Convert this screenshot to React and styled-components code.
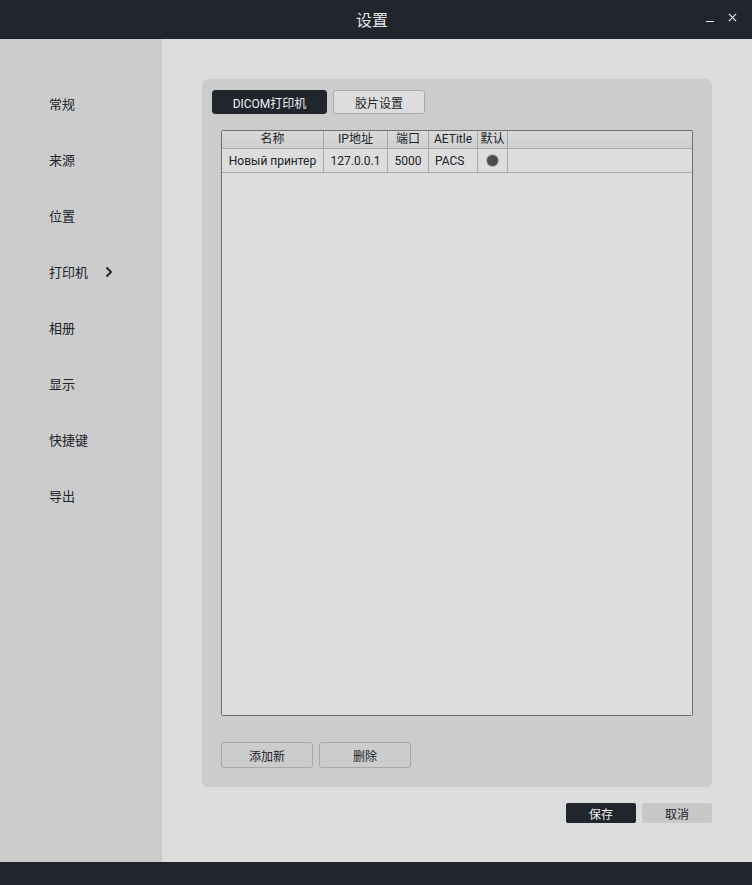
import styled, { createGlobalStyle } from 'styled-components';

const GlobalStyle = createGlobalStyle`
  html, body {
    margin: 0;
    padding: 0;
    background: #dddddd;
  }
  body {
    font-family: Roboto, "Noto Sans CJK SC", sans-serif;
    color: #202329;
  }
`;

const NAV_ITEMS = ['常规', '来源', '位置', '打印机', '相册', '显示', '快捷键', '导出'];

const COLUMNS = [
  { title: '名称', width: 102 },
  { title: 'IP地址', width: 64 },
  { title: '端口', width: 41 },
  { title: 'AETitle', width: 49 },
  { title: '默认', width: 30 },
];

const ROWS = [{ name: 'Новый принтер', ip: '127.0.0.1', port: '5000', ae: 'PACS', isDefault: true }];

const App = () => {
  return (
    <Window>
      <GlobalStyle />
      <TitleBar>
        <Title>设置</Title>
        <WindowControls>
          <Minimize />
          <CloseIcon viewBox='0 0 10 10'>
            <path d='M1 1 L9 9 M9 1 L1 9' stroke='#e6e6e6' strokeWidth='1.4' />
          </CloseIcon>
        </WindowControls>
      </TitleBar>
      <Body>
        <Sidebar>
          {NAV_ITEMS.map((item) => (
            <NavItem key={item}>
              {item}
              {item === '打印机' && (
                <Chevron viewBox='0 0 8 12'>
                  <path d='M1.5 1.5 L6 6 L1.5 10.5' stroke='#202329' strokeWidth='2' fill='none' />
                </Chevron>
              )}
            </NavItem>
          ))}
        </Sidebar>
        <Main>
          <Panel>
            <Tabs>
              <Tab $active style={{ width: 115 }}>DICOM打印机</Tab>
              <Tab style={{ width: 92 }}>胶片设置</Tab>
            </Tabs>
            <Table>
              <HeaderRow>
                {COLUMNS.map((col) => (
                  <HeaderCell key={col.title} $width={col.width}>{col.title}</HeaderCell>
                ))}
                <HeaderCell $fill />
              </HeaderRow>
              {ROWS.map((row) => (
                <Row key={row.name}>
                  <Cell $width={102}>{row.name}</Cell>
                  <Cell $width={64}>{row.ip}</Cell>
                  <Cell $width={41}>{row.port}</Cell>
                  <Cell $width={49} $left>{row.ae}</Cell>
                  <Cell $width={30}>{row.isDefault && <Dot />}</Cell>
                  <Cell $fill />
                </Row>
              ))}
            </Table>
            <Actions>
              <OutlineButton>添加新</OutlineButton>
              <OutlineButton>删除</OutlineButton>
            </Actions>
          </Panel>
          <Footer>
            <FooterButton $primary>保存</FooterButton>
            <FooterButton>取消</FooterButton>
          </Footer>
        </Main>
      </Body>
      <BottomBar />
    </Window>
  );
};

const Window = styled.div`
  width: 752px;
  height: 885px;
  display: flex;
  flex-direction: column;
  background: #dddddd;
  overflow: hidden;
`;

const TitleBar = styled.div`
  height: 39px;
  flex-shrink: 0;
  background: #21252d;
  position: relative;
  display: flex;
  align-items: center;
  justify-content: center;
`;

const Title = styled.div`
  color: #e4e4e4;
  font-size: 16px;
  font-family: "Noto Sans CJK SC", sans-serif;
  margin: -2px 8px 0 0;
`;

const WindowControls = styled.div`
  position: absolute;
  right: 15px;
  top: 13px;
  display: flex;
  align-items: flex-end;
  gap: 14px;
`;

const Minimize = styled.div`
  width: 8px;
  height: 1px;
  background: #e6e6e6;
  margin-bottom: 0;
`;

const CloseIcon = styled.svg`
  width: 9px;
  height: 9px;
`;

const Body = styled.div`
  flex: 1;
  display: flex;
  min-height: 0;
`;

const Sidebar = styled.div`
  width: 162px;
  flex-shrink: 0;
  background: #cccccc;
  padding-top: 55px;
  box-sizing: border-box;
`;

const NavItem = styled.div`
  height: 56px;
  padding-left: 49px;
  display: flex;
  align-items: flex-start;
  font-size: 13px;
  font-family: "Noto Sans CJK SC", sans-serif;
  color: #202329;
  line-height: 20px;
`;

const Chevron = styled.svg`
  width: 8px;
  height: 12px;
  margin-left: 17px;
  margin-top: 4px;
`;

const Main = styled.div`
  flex: 1;
  padding: 40px 40px 0 40px;
  display: flex;
  flex-direction: column;
`;

const Panel = styled.div`
  height: 708px;
  background: #cccccc;
  border-radius: 6px;
  padding: 11px 19px 0 10px;
  box-sizing: border-box;
  display: flex;
  flex-direction: column;
`;

const Tabs = styled.div`
  display: flex;
  gap: 6px;
`;

const Tab = styled.div`
  height: 24px;
  box-sizing: border-box;
  border-radius: 3px;
  display: flex;
  align-items: center;
  justify-content: center;
  font-size: 12px;
  font-family: Roboto, "Noto Sans CJK SC", sans-serif;
  background: ${(p) => (p.$active ? '#21252d' : '#dddddd')};
  color: ${(p) => (p.$active ? '#f0f0f0' : '#202329')};
  border: 1px solid ${(p) => (p.$active ? '#21252d' : '#aaaaaa')};
`;

const Table = styled.div`
  margin: 16px 0 0 9px;
  height: 586px;
  box-sizing: border-box;
  border: 1px solid #6e6e6e;
  border-radius: 2px;
  background: #dddddd;
  display: flex;
  flex-direction: column;
`;

const HeaderRow = styled.div`
  display: flex;
  height: 17px;
  background: linear-gradient(#d9d9d9, #cfcfcf);
  border-bottom: 1px solid #a8a8a8;
`;

const HeaderCell = styled.div`
  ${(p) => (p.$fill ? 'flex: 1;' : `width: ${p.$width}px;`)}
  box-sizing: border-box;
  border-right: ${(p) => (p.$fill ? 'none' : '1px solid #a8a8a8')};
  font-size: 12px;
  line-height: 17px;
  text-align: center;
  color: #202329;
  white-space: nowrap;
  overflow: hidden;
`;

const Row = styled.div`
  display: flex;
  height: 23px;
  border-bottom: 1px solid #a8a8a8;
`;

const Cell = styled.div`
  ${(p) => (p.$fill ? 'flex: 1;' : `width: ${p.$width}px;`)}
  box-sizing: border-box;
  border-right: ${(p) => (p.$fill ? 'none' : '1px solid #a8a8a8')};
  font-size: 12px;
  display: flex;
  align-items: center;
  justify-content: ${(p) => (p.$left ? 'flex-start' : 'center')};
  padding-left: ${(p) => (p.$left ? '6px' : '0')};
  color: #202329;
  white-space: nowrap;
`;

const Dot = styled.div`
  width: 11px;
  height: 11px;
  border-radius: 50%;
  background: #4a4c52;
  box-shadow: 0 0 0 1px #b4b4b4;
`;

const Actions = styled.div`
  display: flex;
  gap: 6px;
  margin: 26px 0 0 9px;
`;

const OutlineButton = styled.div`
  width: 92px;
  height: 26px;
  box-sizing: border-box;
  border: 1px solid #a8a8a8;
  border-radius: 3px;
  display: flex;
  align-items: center;
  justify-content: center;
  font-size: 12px;
  font-family: "Noto Sans CJK SC", sans-serif;
  color: #202329;
`;

const Footer = styled.div`
  display: flex;
  justify-content: flex-end;
  gap: 6px;
  margin-top: 16px;
`;

const FooterButton = styled.div`
  width: 70px;
  height: 20px;
  border-radius: 2px;
  display: flex;
  align-items: center;
  justify-content: center;
  font-size: 12px;
  font-family: "Noto Sans CJK SC", sans-serif;
  background: ${(p) => (p.$primary ? '#21252d' : '#c8c8c8')};
  color: ${(p) => (p.$primary ? '#f0f0f0' : '#202329')};
`;

const BottomBar = styled.div`
  height: 23px;
  flex-shrink: 0;
  background: #21252d;
`;

export default App;
